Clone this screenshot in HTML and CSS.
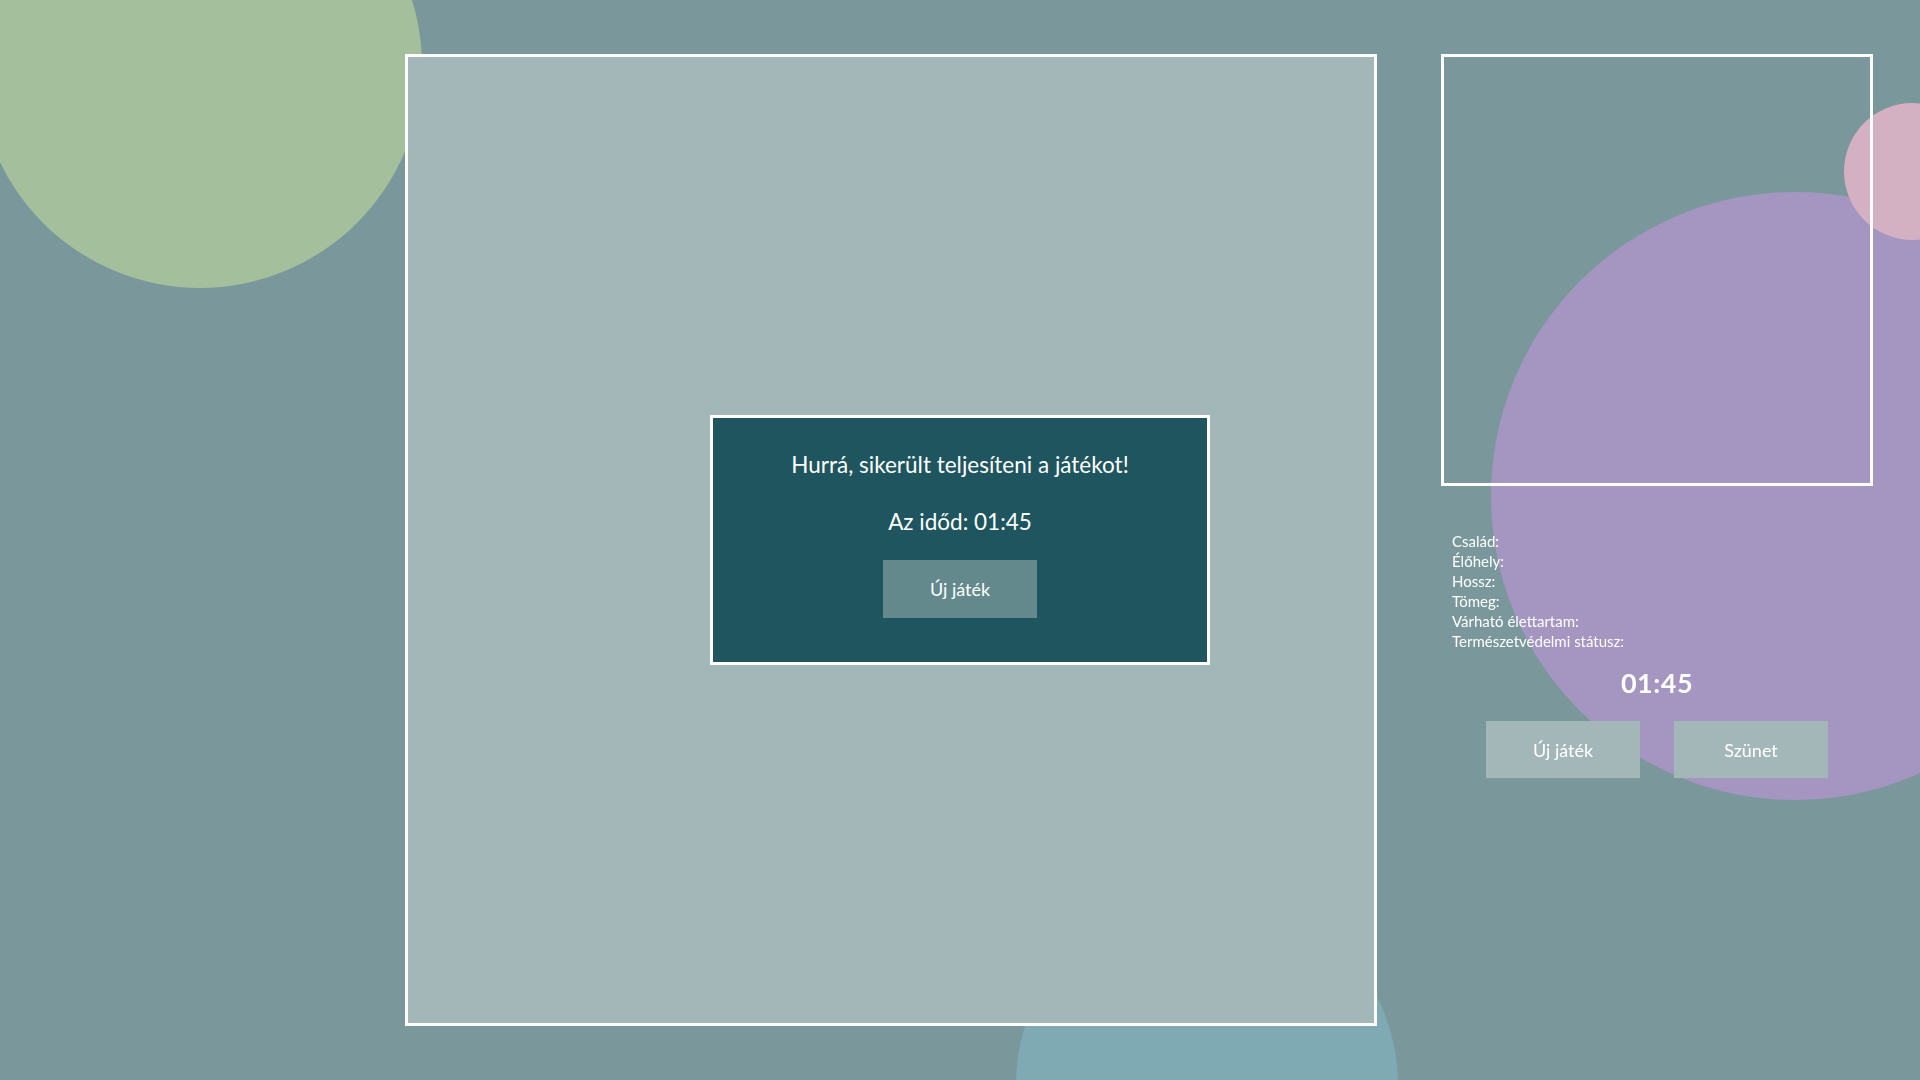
FILE: index.html
```html
<!DOCTYPE html>
<html lang="hu">
<head>
<meta charset="utf-8">
<title>Puzzle</title>
<link rel="stylesheet" href="styles.css">
</head>
<body>
  <div class="backdrop">
    <div class="blob blob-green"></div>
    <div class="blob blob-purple"></div>
    <div class="blob blob-pink"></div>
    <div class="blob blob-blue"></div>
  </div>

  <main class="layout">
    <section class="board"></section>
    <aside class="side">
      <div class="preview"></div>
      <ul class="info">
        <li>Család:</li>
        <li>Élőhely:</li>
        <li>Hossz:</li>
        <li>Tömeg:</li>
        <li>Várható élettartam:</li>
        <li>Természetvédelmi státusz:</li>
      </ul>
      <div class="timer">01:45</div>
      <div class="controls">
        <button class="btn btn-light">Új játék</button>
        <button class="btn btn-light">Szünet</button>
      </div>
    </aside>
  </main>

  <div class="modal">
    <p class="modal-title">Hurrá, sikerült teljesíteni a játékot!</p>
    <p class="modal-time">Az időd: 01:45</p>
    <button class="btn btn-dark">Új játék</button>
  </div>
</body>
</html>
```
FILE: styles.css
```css
* { box-sizing: border-box; }

html, body {
  margin: 0;
  width: 100%;
  height: 100%;
}

body {
  background: #7a989c;
  font-family: "Lato", "Open Sans", sans-serif;
  color: #ffffff;
  overflow: hidden;
  position: relative;
}

.backdrop {
  position: fixed;
  left: 0;
  top: 0;
  width: 100%;
  height: 100%;
  overflow: hidden;
  z-index: 0;
}

.blob {
  position: absolute;
  border-radius: 50%;
}
.blob-green {
  left: -22px;
  top: -156px;
  width: 444px;
  height: 444px;
  background: #a4bf9c;
}
.blob-purple {
  left: 1491px;
  top: 192px;
  width: 608px;
  height: 608px;
  background: #a495c1;
}
.blob-pink {
  left: 1844px;
  top: 103px;
  width: 137px;
  height: 137px;
  background: #d4b0c3;
}
.blob-blue {
  left: 1016px;
  top: 893px;
  width: 382px;
  height: 382px;
  background: #7faab3;
}

.layout {
  position: relative;
  z-index: 1;
  display: flex;
  gap: 64px;
  padding: 54px 0 0 405px;
}

.board {
  flex: none;
  width: 972px;
  height: 972px;
  border: 3px solid #ffffff;
  background: #a3b7b9;
}

.side {
  flex: none;
  width: 432px;
  display: flex;
  flex-direction: column;
}

.preview {
  width: 432px;
  height: 432px;
  border: 3px solid #ffffff;
}

.info {
  list-style: none;
  margin: 45px 0 0 0;
  padding: 0 0 0 11px;
  font-size: 15px;
  line-height: 20px;
}

.timer {
  margin-top: 14px;
  text-align: center;
  font-size: 27px;
  font-weight: 700;
  line-height: 36px;
  letter-spacing: 0.5px;
}

.controls {
  margin-top: 20px;
  display: flex;
  justify-content: center;
  gap: 34px;
}

.btn {
  width: 154px;
  height: 57px;
  border: none;
  color: #ffffff;
  font-family: inherit;
  font-size: 18px;
  cursor: pointer;
}
.btn-light { background: #a3b7b9; }
.btn-dark { background: #63898c; height: 58px; }

.modal {
  position: fixed;
  z-index: 2;
  left: 710px;
  top: 415px;
  width: 500px;
  height: 250px;
  border: 3px solid #ffffff;
  background: #1f555e;
  display: flex;
  flex-direction: column;
  align-items: center;
  padding-top: 32px;
}

.modal-title {
  margin: 0;
  font-size: 22.5px;
  line-height: 30px;
}

.modal-time {
  margin: 27px 0 0 0;
  font-size: 22.5px;
  line-height: 30px;
}

.modal .btn {
  margin-top: 23px;
}
```
